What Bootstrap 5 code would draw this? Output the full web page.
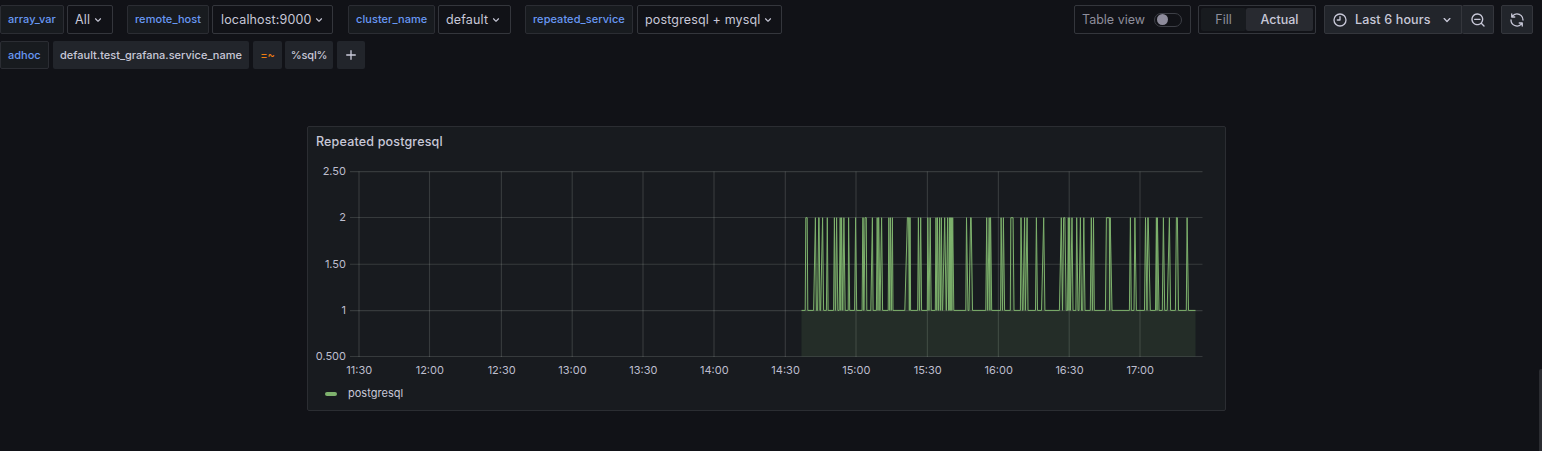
<!DOCTYPE html>
<html lang="en" data-bs-theme="dark">
<head>
<meta charset="utf-8">
<meta name="viewport" content="width=device-width, initial-scale=1">
<title>Repeated postgresql</title>
<link href="https://cdn.jsdelivr.net/npm/bootstrap@5.3.0/dist/css/bootstrap.min.css" rel="stylesheet">
<style>
  body { background: #111217; color: #c8c8d8; font-family: Inter, sans-serif; font-size: 12.5px; height: 451px; line-height: 1; }
  svg { display: block; flex: none; }
  .ico { fill: currentColor; }
  .toolbar-row { padding: 5px 9px 0 0; }
  .adhoc-row { padding-top: 7px; }
  .ctl { height: 29px; border: 1px solid #34363c; border-radius: 2px; white-space: nowrap; }
  .var-label { background: #181b1f; border-color: #2b2d33; color: #6898f4; font-size: 11px; font-weight: 500; padding-left: 7px; letter-spacing: .06px; }
  .var-value { padding: 1px 7px 0; margin-left: 3px; justify-content: space-between; letter-spacing: .15px; }
  .seg { height: 28px; background: #22252b; border-radius: 2px; font-size: 11px; font-weight: 500; letter-spacing: 0; white-space: nowrap; }
  .op { color: #ee7d12; }
  .w-a { width: 64px } .w-b { width: 46px } .w-c { width: 82px } .w-d { width: 121px } .w-e { width: 87px }
  .w-f { width: 73px } .w-g { width: 108px } .w-h { width: 145px }
  .gap-l { margin-left: 14px; } .gap-m { margin-left: 15px; }
  .muted { color: #8e8e9b; }
  .toggle { width: 28px; height: 14px; border: 1px solid #3d3f46; border-radius: 8px; padding: 0 2px; }
  .toggle i { width: 11px; height: 11px; border-radius: 50%; background: #8e8c9c; }
  .view-toggle { width: 117px; padding: 0 8px 0 7px; }
  .fit-group { width: 118px; padding: 2px; margin-left: 7px; }
  .fit-group > * { height: 23px; border-radius: 2px; padding-top: 1px; }
  .fit-a { width: 45px; background: #181b1f; } .fit-b { width: 67px; background: #282a30; font-weight: 500; }
  .solid { background: #22252b; font-weight: 500; }
  .text-drop { padding-top: 1px; }
  .viz { width: 919px; height: 285px; margin: 57px 0 0 307px; background: #181b1f; border: 1px solid #2b2d32; border-radius: 2px; }
  .viz-title { height: 29px; padding: 2px 8px 0; font-size: 12.5px; font-weight: 500; letter-spacing: .17px; }
  .viz-legend { height: 27px; padding-left: 17px; font-size: 11px; gap: 11px; letter-spacing: .02px; }
  .viz-legend i { width: 12px; height: 4px; border-radius: 2px; background: #7eb26d; }
  .tick { fill: #bebece; font-size: 11px; }
  .thumb { right: 0; top: 369px; width: 3px; height: 82px; background: #2b2c31; border-radius: 2px 0 0 0; }
</style>
</head>
<body class="overflow-hidden position-relative">
<svg class="d-none">
  <symbol id="down" viewBox="0 0 24 24"><path d="M17,9.17a1,1,0,0,0-1.41,0L12,12.71,8.46,9.17a1,1,0,0,0-1.41,0,1,1,0,0,0,0,1.42l4.24,4.24a1,1,0,0,0,1.42,0L17,10.59A1,1,0,0,0,17,9.17Z"/></symbol>
</svg>

<header>
  <div class="toolbar-row d-flex">
    <div class="ctl var-label w-a d-flex align-items-center">array_var</div>
    <div class="ctl var-value w-b d-flex align-items-center">All<svg class="ico" width="14" height="14"><use href="#down"/></svg></div>
    <div class="ctl var-label w-c gap-l d-flex align-items-center">remote_host</div>
    <div class="ctl var-value w-d d-flex align-items-center" style="padding-left:8px;padding-right:6px">localhost:9000<svg class="ico" width="14" height="14"><use href="#down"/></svg></div>
    <div class="ctl var-label w-e gap-m d-flex align-items-center">cluster_name</div>
    <div class="ctl var-value w-f d-flex align-items-center">default<svg class="ico" width="14" height="14"><use href="#down"/></svg></div>
    <div class="ctl var-label w-g gap-l d-flex align-items-center">repeated_service</div>
    <div class="ctl var-value w-h ms-1 d-flex align-items-center">postgresql + mysql<svg class="ico" width="14" height="14"><use href="#down"/></svg></div>

    <div class="ctl view-toggle muted ms-auto d-flex align-items-center justify-content-between"><span class="text-drop">Table view</span><span class="toggle d-flex align-items-center"><i></i></span></div>
    <div class="ctl fit-group d-flex align-items-center">
      <span class="fit-a muted d-flex align-items-center justify-content-center">Fill</span>
      <span class="fit-b flex-fill d-flex align-items-center justify-content-center">Actual</span>
    </div>
    <div class="ctl solid ms-2 d-flex align-items-center rounded-end-0" style="width:138px;padding:0 6px 0 7px">
      <svg class="ico" width="16" height="16" viewBox="0 0 24 24"><path d="M12,2A10,10,0,1,0,22,12,10,10,0,0,0,12,2Zm0,18a8,8,0,1,1,8-8A8,8,0,0,1,12,20ZM12,6a1,1,0,0,0-1,1v4H8a1,1,0,0,0,0,2h4a1,1,0,0,0,1-1V7A1,1,0,0,0,12,6Z"/></svg>
      <span class="text-drop" style="margin-left:7px;letter-spacing:.15px">Last 6 hours</span>
      <svg class="ico ms-auto" width="16" height="16"><use href="#down"/></svg>
    </div>
    <div class="ctl solid border-start-0 d-flex align-items-center justify-content-center" style="width:32px">
      <svg class="ico" width="16" height="16" viewBox="0 0 24 24"><path d="M21.71,20.29,18,16.61A9,9,0,1,0,16.61,18l3.68,3.68a1,1,0,0,0,1.42,0A1,1,0,0,0,21.71,20.29ZM11,18a7,7,0,1,1,7-7A7,7,0,0,1,11,18Zm4-8H7a1,1,0,0,0,0,2h8a1,1,0,0,0,0-2Z"/></svg>
    </div>
    <div class="ctl solid d-flex align-items-center justify-content-center" style="width:32px;margin-left:7px">
      <svg class="ico" width="16" height="16" viewBox="0 0 24 24"><path d="M19.91,15.51H15.38a1,1,0,0,0,0,2h2.4A8,8,0,0,1,4,12a1,1,0,1,0-2,0,10,10,0,0,0,16.88,7.23V21a1,1,0,0,0,2,0V16.5A1,1,0,0,0,19.91,15.51ZM12,2A10,10,0,0,0,5.12,4.77V3a1,1,0,0,0-2,0V7.5a1,1,0,0,0,1,1h4.5a1,1,0,0,0,0-2H6.22A8,8,0,0,1,20,12a1,1,0,0,0,2,0A10,10,0,0,0,12,2Z"/></svg>
    </div>
  </div>
  <div class="adhoc-row d-flex">
    <div class="ctl seg var-label d-flex align-items-center" style="width:49px;background:#181b1f">adhoc</div>
    <div class="seg ms-1 d-flex align-items-center justify-content-center" style="width:196px">default.test_grafana.service_name</div>
    <div class="seg op ms-1 d-flex align-items-center justify-content-center" style="width:29px">=~</div>
    <div class="seg d-flex align-items-center justify-content-center" style="width:48px;margin-left:3px;letter-spacing:-.12px">%sql%</div>
    <div class="seg ms-1 d-flex align-items-center justify-content-center" style="width:28px"><svg width="10" height="10" stroke="#ccccdc" stroke-width="1.3" stroke-linecap="round"><path d="M5 .7v8.6M.7 5h8.6"/></svg></div>
  </div>
</header>

<main>
  <section class="viz">
    <div class="viz-title d-flex align-items-center">Repeated postgresql</div>
    <svg id="plot" width="917" height="224" viewBox="308 156 917 224"></svg>
    <div class="viz-legend d-flex align-items-center"><i></i><span>postgresql</span></div>
  </section>
</main>
<div class="thumb position-absolute"></div>

<script src="https://cdn.jsdelivr.net/npm/bootstrap@5.3.0/dist/js/bootstrap.bundle.min.js"></script>
<script>
  const yLabels = [['2.50', 171.6], ['2', 217.5], ['1.50', 264.2], ['1', 310.6], ['0.500', 356.5]];
  const xLabels = [['11:30', 359], ['12:00', 429.5], ['12:30', 501.4], ['13:00', 572.2], ['13:30', 643], ['14:00', 714],
    ['14:30', 785.3], ['15:00', 856], ['15:30', 927.4], ['16:00', 998.4], ['16:30', 1069.2], ['17:00', 1140]];
  // each pulse: rise start, top start, top end, fall end
  const pulses = [
    [805.2,805.8,807.2,807.8],[813.6,815.4,815.4,816.4],[817.6,818.7,819.1,819.9],[820.6,822.6,822.6,823.6],[826.4,827.3,827.3,828.1],
    [833.6,834.4,834.4,835.3],[835.6,836.6,836.6,837.8],[839.2,840.2,840.2,840.8],[840.8,841.6,841.6,842.7],[842.8,843.9,843.9,845.2],
    [848.2,848.6,848.6,849.7],[854.6,855.6,855.6,856.7],[862.1,862.8,863.2,863.7],[864,865,866.3,866.8],[870.8,872.4,872.4,873.1],
    [876.4,877.2,877.2,878],[878,878.4,878.8,879.8],[880,881.6,881.6,882.6],[888.2,888.8,888.8,889.7],[889.7,890.4,890.4,891.3],[891.3,892.4,892.4,893],
    [904.8,907.4,908.6,909.3],[909.4,909.7,910.2,910.6],[917.7,918.4,918.4,919.4],[919.6,920.7,920.7,921.6],
    [927.3,927.8,927.8,928.9],[929,930.2,930.2,931.2],[935.3,936,936,936.8],[936.8,937.5,937.5,938.5],[938.8,939.6,939.6,940.5],[940.5,941.4,941.4,942.2],
    [942.6,944.7,944.7,946.2],[946.4,947.6,947.6,948.6],[948.9,949.4,949.4,949.9],[949.9,950.4,950.4,950.9],[950.9,951.4,951.4,951.9],[951.9,952.7,952.7,953.8],
    [965.8,966.5,966.5,968],[969,970.6,971.2,972.5],[985.8,986.7,986.7,987.7],[987.7,989.2,989.2,989.9],[989.9,990.4,990.6,991.7],
    [1000.6,1001.1,1001.1,1002.5],[1002.5,1003.4,1003.4,1004.6],[1010.3,1010.8,1013.1,1014],[1020.4,1021,1021,1022.4],[1023,1024.6,1024.6,1025.3],[1025.4,1027.1,1027.1,1028],
    [1035.5,1036.4,1036.4,1037.5],[1041.5,1043.7,1043.7,1044.9],[1059.4,1061.3,1061.3,1062.5],[1062.5,1063.6,1064.9,1066.2],[1067.6,1068.3,1068.3,1069],[1069,1069.6,1069.6,1070.4],[1070.4,1072,1072,1073],
    [1075.9,1076.7,1076.7,1078],[1079,1080.4,1080.4,1081.5],[1082.7,1083.8,1083.8,1085],[1090.3,1091.3,1091.3,1092.3],[1092.5,1093.5,1093.5,1094.3],
    [1105.4,1106.4,1109.4,1109.7],[1109.7,1110.2,1110.2,1112],[1129.4,1130.4,1130.4,1131.3],[1134,1134.9,1134.9,1136.4],
    [1144.5,1145.5,1145.5,1147],[1147,1147.8,1148.2,1150.3],[1155.5,1156.4,1156.4,1157],[1157,1157.4,1157.4,1159],[1162.3,1163.4,1163.4,1164.7],[1167.2,1169.4,1169.4,1170.6],
    [1175.4,1176.4,1177.4,1178.5],[1186.3,1187.1,1187.1,1188.5]];
  const base = 310.4, top1 = 217.7;
  let d = `M801.5 ${base}`;
  for (const [a, b, c, e] of pulses) d += `L${a} ${base}L${b} ${top1}L${c} ${top1}L${e} ${base}`;
  d += `L1195.5 ${base}`;
  let s = '<g stroke="#f0faf0" stroke-opacity=".14" stroke-width="1.15">';
  for (const [, y] of yLabels) s += `<path d="M350 ${y}H1202.5"/>`;
  for (const [, x] of xLabels) s += `<path d="M${x} 171.5V357"/>`;
  s += '</g>';
  s += `<path d="${d}V356.5H801.5Z" fill="#7eb26d" fill-opacity=".12"/>`;
  s += `<path d="${d}" fill="none" stroke="#7eb26d" stroke-width="1" stroke-linejoin="bevel"/>`;
  for (const [t, y] of yLabels) s += `<text class="tick" x="346" y="${Math.floor(y) + 4}" text-anchor="end">${t}</text>`;
  for (const [t, x] of xLabels) s += `<text class="tick" x="${x + .3}" y="374" text-anchor="middle">${t}</text>`;
  document.getElementById('plot').innerHTML = s;
</script>
</body>
</html>
